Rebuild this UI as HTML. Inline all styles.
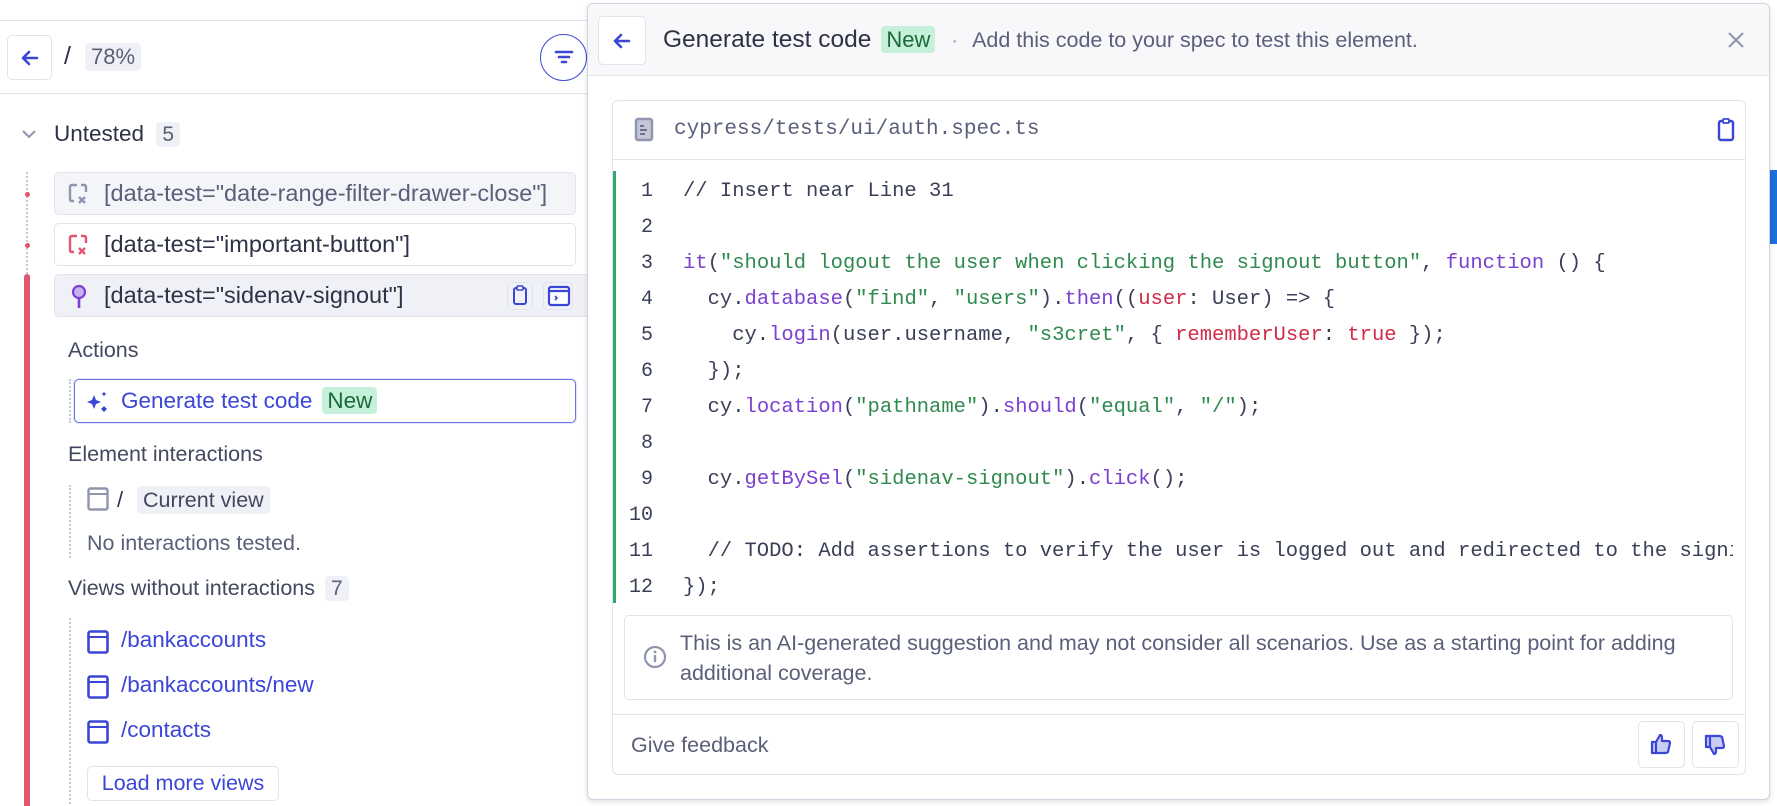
<!DOCTYPE html>
<html><head><meta charset="utf-8"><style>
*{box-sizing:border-box;margin:0;padding:0}
body{width:1777px;height:806px;overflow:hidden;background:#fff;font-family:"Liberation Sans",sans-serif;color:#2e3247;position:relative}
.a{position:absolute;white-space:nowrap}
.badge{background:#f0f1f6;border-radius:4px;color:#5a5f7a;padding:1px 6px}
.new{color:#1b6b3a;background:#c6f0d9;border-radius:4px;padding:1px 5px;margin-left:10px}
.row{position:absolute;left:54px;width:522px;height:43px;border:1px solid #e1e3ed;border-radius:5px;font-size:23.5px;display:flex;align-items:center;padding-left:49px;color:#2e3247;white-space:nowrap;overflow:hidden}
.code{font-family:"Liberation Mono",monospace;font-size:20.5px;white-space:pre;color:#3a3f58}
.ln{position:absolute;left:613px;width:40px;text-align:right;font-family:"Liberation Mono",monospace;font-size:20px;color:#3a3f58;line-height:36px}
.c1{color:#2f8a4e}.c2{color:#7b3fd1}.c3{color:#d12b47}
.lnk{position:absolute;left:121px;font-size:22.5px;color:#3b46d6;line-height:28px}
.lbl{position:absolute;left:68px;font-size:21.5px;color:#434861;line-height:28px}
</style></head><body>
<div class="a" style="left:0;top:20px;width:590px;height:1px;background:#e1e3ed"></div>
<div class="a" style="left:7px;top:35px;width:45px;height:45px;border:1px solid #e1e3ed;border-radius:5px"></div>
<svg class="a" style="left:19px;top:47px" width="22" height="22" viewBox="0 0 22 22"><path d="M18 11H4M10 5L4 11L10 17" stroke="#3b46d6" stroke-width="2.6" fill="none" stroke-linecap="round" stroke-linejoin="round"/></svg>
<div class="a" style="left:64px;top:42px;font-size:25px">/</div>
<div class="a badge" style="left:85px;top:43px;font-size:22px;padding:1px 6px">78%</div>
<div class="a" style="left:540px;top:34px;width:47px;height:47px;border:1.5px solid #3b46d6;border-radius:50%"></div>
<svg class="a" style="left:553px;top:49px" width="22" height="16"><path d="M3 3H19M6 8H16M9 13H13" stroke="#3b46d6" stroke-width="2.6" stroke-linecap="round"/></svg>
<div class="a" style="left:0;top:93px;width:590px;height:1px;background:#e1e3ed"></div>
<svg class="a" style="left:20px;top:127px" width="18" height="14"><path d="M3 4L9 10L15 4" stroke="#9095ad" stroke-width="2" fill="none"/></svg>
<div class="a" style="left:54px;top:120px;font-size:22.5px;line-height:28px">Untested <span class="badge" style="font-size:21px;margin-left:6px">5</span></div>
<div class="a" style="left:26px;top:172px;height:102px;border-left:2px dotted #c4c7d6"></div>
<div class="a" style="left:25px;top:192px;width:5px;height:5px;border-radius:50%;background:#e05570"></div>
<div class="a" style="left:25px;top:243px;width:5px;height:5px;border-radius:50%;background:#e05570"></div>
<div class="a" style="left:24px;top:274px;width:6px;height:532px;background:#e05570;border-radius:3px 3px 0 0"></div>
<div class="row" style="top:172px;background:#f4f5f9;color:#5a5f7a">[data-test="date-range-filter-drawer-close"]</div>
<svg class="a" style="left:67px;top:182px" width="25" height="25"><path d="M10 3H5Q3 3 3 5V17Q3 19 5 19H7M14 3H17Q19 3 19 5V10" stroke="#9095ad" stroke-width="2.4" fill="none"/><path d="M12 15L18 21M18 15L12 21" stroke="#9095ad" stroke-width="2.4"/></svg>
<div class="row" style="top:223px">[data-test="important-button"]</div>
<svg class="a" style="left:67px;top:233px" width="25" height="25"><path d="M10 3H5Q3 3 3 5V17Q3 19 5 19H7M14 3H17Q19 3 19 5V10" stroke="#e05570" stroke-width="2.4" fill="none"/><path d="M12 15L18 21M18 15L12 21" stroke="#e05570" stroke-width="2.4"/></svg>
<div class="row" style="top:274px;background:#f0f1f6;width:540px">[data-test="sidenav-signout"]</div>
<svg class="a" style="left:69px;top:284px" width="20" height="26"><circle cx="10" cy="8" r="6" fill="#c9b0f0" stroke="#7b3fd1" stroke-width="2.2"/><path d="M10 14V24" stroke="#7b3fd1" stroke-width="2.6"/></svg>
<div class="a" style="left:507px;top:282px;width:26px;height:28px;border:1px solid #e1e3ed;border-radius:4px"></div>
<svg class="a" style="left:510px;top:284px" width="20" height="24"><rect x="4" y="4" width="12" height="16" rx="2" stroke="#3b46d6" stroke-width="2" fill="none"/><rect x="7" y="2" width="6" height="4" rx="1" fill="#fff" stroke="#3b46d6" stroke-width="1.6"/></svg>
<div class="a" style="left:543px;top:282px;width:30px;height:28px;border:1px solid #e1e3ed;border-radius:4px"></div>
<svg class="a" style="left:547px;top:285px" width="24" height="22"><rect x="2" y="2" width="20" height="18" rx="2" stroke="#3b46d6" stroke-width="2.2" fill="#fff"/><path d="M2 6H22" stroke="#3b46d6" stroke-width="2.2"/><path d="M8 11L10 13L8 15" stroke="#3b46d6" stroke-width="1.6" fill="none"/></svg>
<div class="lbl" style="top:336px">Actions</div>
<div class="a" style="left:69px;top:379px;height:44px;border-left:2px dotted #c4c7d6"></div>
<div class="a" style="left:74px;top:379px;width:502px;height:44px;border:1.5px solid #6a73e6;border-radius:5px;box-shadow:0 0 0 1px #e3e5fb"></div>
<svg class="a" style="left:86px;top:391px" width="24" height="22"><path d="M8 4L10 9L15 11L10 13L8 18L6 13L1 11L6 9Z" fill="#3b46d6"/><path d="M18 1L20 3L18 5L16 3Z M18 15L21 18L18 21L15 18Z" fill="#3b46d6"/></svg>
<div class="a" style="left:121px;top:387px;font-size:22.5px;color:#3b46d6;line-height:28px">Generate test code<span class="new">New</span></div>
<div class="lbl" style="top:440px">Element interactions</div>
<div class="a" style="left:69px;top:485px;height:73px;border-left:2px dotted #c4c7d6"></div>
<svg class="a" style="left:87px;top:487px" width="22" height="25"><rect x="1.5" y="1.5" width="19" height="21" rx="2" stroke="#9095ad" stroke-width="2.4" fill="none"/><path d="M1.5 7H20.5" stroke="#9095ad" stroke-width="2"/></svg>
<div class="a" style="left:117px;top:486px;font-size:22px;line-height:28px">/</div>
<div class="a badge" style="left:137px;top:486px;font-size:21.5px;color:#434861;line-height:26px">Current view</div>
<div class="a" style="left:87px;top:529px;font-size:21.5px;color:#5a5f7a;line-height:28px">No interactions tested.</div>
<div class="lbl" style="top:574px">Views without interactions <span class="badge" style="font-size:21px;margin-left:4px">7</span></div>
<div class="a" style="left:69px;top:618px;height:186px;border-left:2px dotted #c4c7d6"></div>
<svg class="a" style="left:87px;top:630px" width="22" height="25"><rect x="1.5" y="1.5" width="19" height="21" rx="2" stroke="#3b46d6" stroke-width="2.6" fill="none"/><path d="M1.5 7H20.5" stroke="#3b46d6" stroke-width="2"/></svg>
<div class="lnk" style="top:626px">/bankaccounts</div>
<svg class="a" style="left:87px;top:675px" width="22" height="25"><rect x="1.5" y="1.5" width="19" height="21" rx="2" stroke="#3b46d6" stroke-width="2.6" fill="none"/><path d="M1.5 7H20.5" stroke="#3b46d6" stroke-width="2"/></svg>
<div class="lnk" style="top:671px">/bankaccounts/new</div>
<svg class="a" style="left:87px;top:720px" width="22" height="25"><rect x="1.5" y="1.5" width="19" height="21" rx="2" stroke="#3b46d6" stroke-width="2.6" fill="none"/><path d="M1.5 7H20.5" stroke="#3b46d6" stroke-width="2"/></svg>
<div class="lnk" style="top:716px">/contacts</div>
<div class="a" style="left:87px;top:766px;width:192px;height:35px;border:1px solid #e1e3ed;border-radius:5px;font-size:21.5px;color:#3b46d6;text-align:center;line-height:33px">Load more views</div>
<div class="a" style="left:1770px;top:170px;width:7px;height:74px;background:#1e6fd9"></div>

<!-- panel -->
<div class="a" style="left:587px;top:3px;width:1183px;height:797px;border:1px solid #d0d3e0;border-radius:6px;background:#fff;box-shadow:0 2px 6px rgba(0,0,0,.12);overflow:hidden">
 <div class="a" style="left:0;top:0;width:100%;height:72px;background:#f8f8fb;border-bottom:1px solid #e1e3ed"></div>
 <div class="a" style="left:10px;top:12px;width:48px;height:49px;border:1px solid #e1e3ed;border-radius:5px;background:#fff"></div>
 <svg class="a" style="left:23px;top:26px" width="22" height="22"><path d="M18 11H4M10 5L4 11L10 17" stroke="#3b46d6" stroke-width="2.6" fill="none" stroke-linecap="round" stroke-linejoin="round"/></svg>
 <div class="a" style="left:75px;top:21px;font-size:24.5px;color:#2e3247;line-height:30px">Generate test code<span class="new" style="font-size:22px">New</span><span style="color:#9095ad;font-size:20px;margin:0 14px 0 16px">·</span><span style="font-size:21.5px;color:#5a5f7a">Add this code to your spec to test this element.</span></div>
 <svg class="a" style="left:1138px;top:26px" width="20" height="20"><path d="M3 3L17 17M17 3L3 17" stroke="#9095ad" stroke-width="2.2"/></svg>
 <div class="a" style="left:24px;top:96px;width:1134px;height:675px;border:1px solid #e1e3ed;border-radius:6px"></div>
 <div class="a" style="left:25px;top:155px;width:1132px;height:1px;background:#e1e3ed"></div>
 <svg class="a" style="left:46px;top:113px" width="20" height="26"><rect x="2" y="2" width="16" height="21" rx="2" fill="#c4c7d6" stroke="#9095ad" stroke-width="2.4"/><path d="M6 9H10M6 13H13M6 17H11" stroke="#6b7090" stroke-width="2"/></svg>
 <div class="a code" style="left:86px;top:114px;color:#5a5f7a;font-size:21px">cypress/tests/ui/auth.spec.ts</div>
 <svg class="a" style="left:1128px;top:113px" width="20" height="26"><rect x="3" y="4" width="14" height="19" rx="2" stroke="#3b46d6" stroke-width="2.4" fill="none"/><rect x="7" y="2" width="6" height="4" rx="1" fill="#fff" stroke="#3b46d6" stroke-width="1.8"/></svg>
 <div class="a" style="left:25px;top:167px;width:3px;height:432px;background:#2fa86a"></div>
</div>
<div class="ln" style="top:174px">1</div><div class="ln" style="top:210px">2</div><div class="ln" style="top:246px">3</div><div class="ln" style="top:282px">4</div><div class="ln" style="top:318px">5</div><div class="ln" style="top:354px">6</div><div class="ln" style="top:390px">7</div><div class="ln" style="top:426px">8</div><div class="ln" style="top:462px">9</div><div class="ln" style="top:498px">10</div><div class="ln" style="top:534px">11</div><div class="ln" style="top:570px">12</div>
<div class="a" style="left:683px;top:174px;width:1050px;overflow:hidden">
<div class="code" style="line-height:36px">// Insert near Line 31

<span class="c2">it</span>(<span class="c1">"should logout the user when clicking the signout button"</span>, <span class="c2">function</span> () {
  cy.<span class="c2">database</span>(<span class="c1">"find"</span>, <span class="c1">"users"</span>).<span class="c2">then</span>((<span class="c3">user</span>: User) =&gt; {
    cy.<span class="c2">login</span>(user.username, <span class="c1">"s3cret"</span>, { <span class="c3">rememberUser</span>: <span class="c3">true</span> });
  });
  cy.<span class="c2">location</span>(<span class="c1">"pathname"</span>).<span class="c2">should</span>(<span class="c1">"equal"</span>, <span class="c1">"/"</span>);

  cy.<span class="c2">getBySel</span>(<span class="c1">"sidenav-signout"</span>).<span class="c2">click</span>();

  // TODO: Add assertions to verify the user is logged out and redirected to the signin page
});</div></div>
<div class="a" style="left:624px;top:615px;width:1109px;height:85px;border:1px solid #e1e3ed;border-radius:5px"></div>
<svg class="a" style="left:643px;top:645px" width="24" height="24"><circle cx="12" cy="12" r="10" stroke="#9095ad" stroke-width="2.2" fill="none"/><path d="M12 10V17" stroke="#9095ad" stroke-width="2.4"/><circle cx="12" cy="7" r="1.4" fill="#9095ad"/></svg>
<div class="a" style="left:680px;top:628px;width:1040px;font-size:21.5px;line-height:30px;color:#5a5f7a;white-space:normal">This is an AI-generated suggestion and may not consider all scenarios. Use as a starting point for adding additional coverage.</div>
<div class="a" style="left:613px;top:714px;width:1132px;height:1px;background:#e1e3ed"></div>
<div class="a" style="left:631px;top:731px;font-size:21.5px;color:#5a5f7a;line-height:28px">Give feedback</div>
<div class="a" style="left:1638px;top:721px;width:47px;height:47px;border:1px solid #e1e3ed;border-radius:5px"></div>
<svg class="a" style="left:1649px;top:732px" width="24" height="24"><path d="M3 10H7V21H3Z M7 10L11 3Q13 3 13 6V9H19Q21 9 21 11L19 20Q18 21 16 21H7" stroke="#3b46d6" stroke-width="2.2" fill="#c9ccf5" stroke-linejoin="round"/></svg>
<div class="a" style="left:1692px;top:721px;width:47px;height:47px;border:1px solid #e1e3ed;border-radius:5px"></div>
<svg class="a" style="left:1703px;top:733px" width="24" height="24"><path d="M3 14H7V3H3Z M7 14L11 21Q13 21 13 18V15H19Q21 15 21 13L19 4Q18 3 16 3H7" stroke="#3b46d6" stroke-width="2.2" fill="#c9ccf5" stroke-linejoin="round"/></svg>
</body></html>
